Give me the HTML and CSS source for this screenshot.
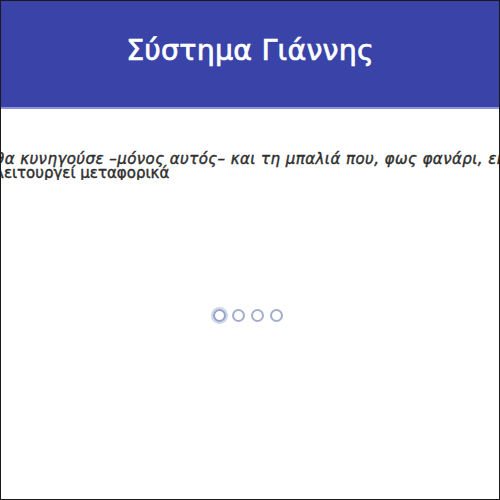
FILE: index.html
```html
<!DOCTYPE html>
<html lang="el">
<head>
<meta charset="utf-8">
<title>Σύστημα Γιάννης</title>
<link rel="stylesheet" href="styles.css">
</head>
<body>
<div class="frame">
  <header class="topbar">
    <h1 class="title">Σύστημα Γιάννης</h1>
  </header>
  <main class="content">
    <div class="story">
      <p class="story-text"><span class="story-line story-italic">θα κυνηγούσε –μόνος αυτός– και τη μπαλιά που, φως φανάρι, εκείνη έδειχνε</span><span class="story-line">λειτουργεί μεταφορικά</span></p>
    </div>
    <div class="loader">
      <span class="dot dot-active"></span>
      <span class="dot"></span>
      <span class="dot"></span>
      <span class="dot"></span>
    </div>
  </main>
</div>
</body>
</html>
```
FILE: styles.css
```css
html, body {
  margin: 0;
  padding: 0;
  background: #ffffff;
}
.frame {
  box-sizing: border-box;
  width: 500px;
  height: 500px;
  border: 1px solid #1a1a1a;
  overflow: hidden;
  display: flex;
  flex-direction: column;
  font-family: "DejaVu Sans", "Liberation Sans", sans-serif;
}
.topbar {
  height: 106px;
  background: #3a44a8;
  border-bottom: 2px solid #8c93d8;
  display: flex;
  align-items: center;
  justify-content: center;
}
.title {
  margin: 0 0 8px 0;
  color: #ffffff;
  font-family: "DejaVu Sans", sans-serif;
  font-weight: normal;
  font-size: 28.5px;
  -webkit-text-stroke: 0.7px #ffffff;
  letter-spacing: 0.2px;
}
.content {
  flex: 1;
  display: flex;
  flex-direction: column;
}
.story {
  overflow: hidden;
  padding-top: 43px;
}
.story-text {
  margin: 0 0 0 -6px;
  width: 760px;
  color: #2e2e2e;
  font-size: 15px;
  font-weight: normal;
  -webkit-text-stroke: 0.4px #2e2e2e;
  white-space: nowrap;
}
.story-line {
  display: block;
  line-height: 14px;
}
.story-italic {
  font-style: italic;
  letter-spacing: 0.45px;
}
.loader {
  margin-top: 129px;
  display: flex;
  justify-content: center;
  gap: 6px;
  padding-right: 4px;
}
.dot {
  box-sizing: border-box;
  width: 13px;
  height: 13px;
  border-radius: 50%;
  border: 2.5px solid #a3aecb;
}
.dot-active {
  border-color: #94a3c9;
  box-shadow: 0 0 0 2px #d0d7eb;
}
```
